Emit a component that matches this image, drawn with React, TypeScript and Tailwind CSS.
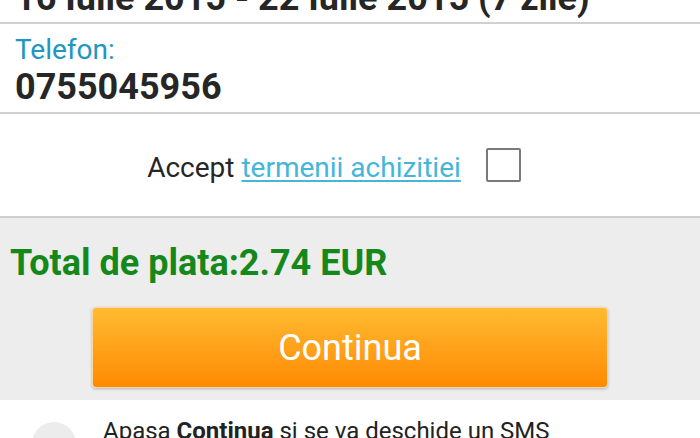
import React from "react";

export default function App() {
  return (
    <div className="w-[700px] h-[438px] overflow-hidden bg-white font-['Roboto','Noto_Sans',sans-serif] text-[#262626]">
      {/* date row (cropped at top) */}
      <div className="border-b-2 border-[#d0d0d0] pl-[15px] pb-[6px]">
        <div className="mt-[-20px] whitespace-nowrap text-[36px] font-bold leading-none">
          16 Iulie 2015 - 22 Iulie 2015 (7 zile)
        </div>
      </div>

      {/* phone */}
      <div className="border-b-2 border-[#d0d0d0] px-[15px] pt-[12px] pb-[7px]">
        <div className="text-[28px] leading-[28px] text-[#2196c3]">Telefon:</div>
        <div className="mt-[5px] text-[36px] font-bold leading-none">0755045956</div>
      </div>

      {/* terms */}
      <div className="flex h-[104px] items-center justify-center border-b-2 border-[#d0d0d0] pr-[32px]">
        <div className="pt-[5px] text-[28px] leading-[28px] whitespace-nowrap">
          Accept{" "}
          <span className="text-[#45b6da] underline decoration-[1.5px] underline-offset-[3px]">
            termenii achizitiei
          </span>
        </div>
        <div className="ml-[25px] h-[34px] w-[35px] rounded-[2px] border-2 border-[#7a7a7a] bg-white" />
      </div>

      {/* total + button */}
      <div className="bg-[#ededed] pt-[27px] pb-[12px]">
        <div className="pl-[10px] text-[36px] font-bold leading-none text-[#14881a]">
          Total de plata:2.74 EUR
        </div>
        <button className="mx-auto mt-[26px] flex h-[81px] w-[516px] items-center justify-center rounded-[4px] border border-[#f7d7a6] bg-gradient-to-b from-[#ffbb30] via-[#ffa21a] to-[#ff8a00] text-[36px] leading-none text-white shadow-[0_1px_3px_rgba(0,0,0,0.25)]">
          Continua
        </button>
      </div>

      {/* info row */}
      <div className="flex items-start pl-[32px] pt-[19px]">
        <div className="mt-[3px] h-[44px] w-[44px] shrink-0 rounded-full bg-[#ececec]" />
        <div className="ml-[27px] whitespace-nowrap text-[24px] leading-none text-[#222]">
          Apasa <span className="font-bold">Continua</span> si se va deschide un SMS
        </div>
      </div>
    </div>
  );
}
